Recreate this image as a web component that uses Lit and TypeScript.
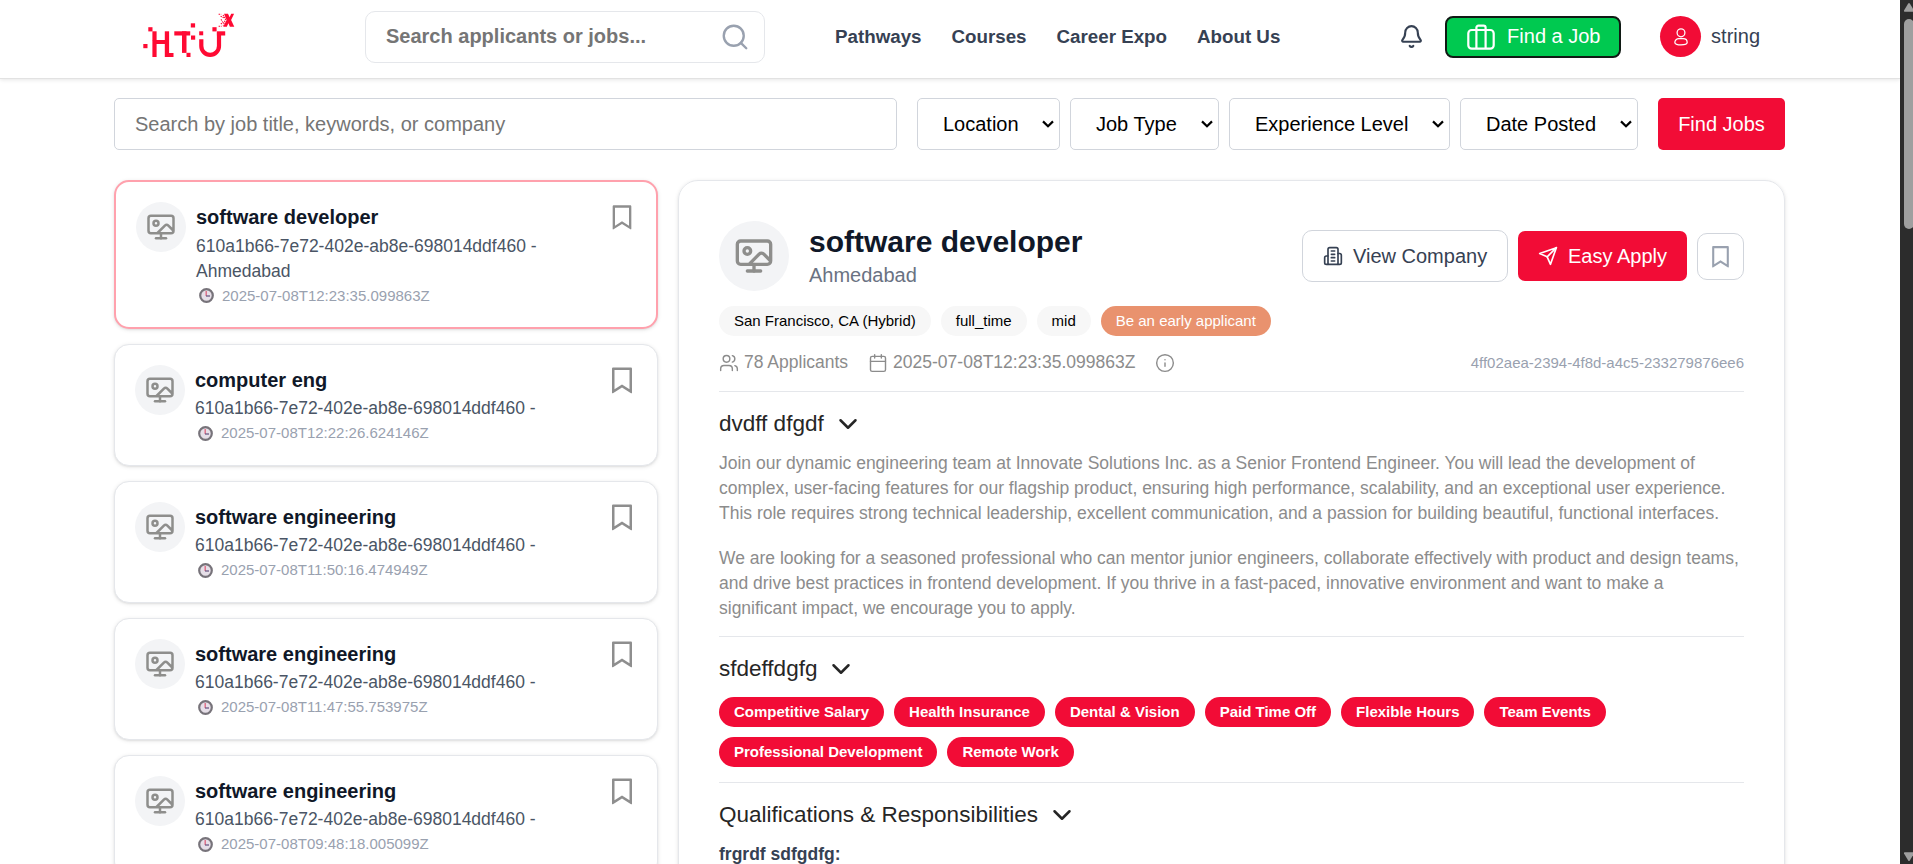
import { LitElement, html, svg, css } from "lit";
import { customElement, property } from "lit/decorators.js";
import { classMap } from "lit/directives/class-map.js";

const bookmarkPath = svg`<path fill="currentColor" d="M5 2H19C19.5523 2 20 2.44772 20 3V22.1433C20 22.4194 19.7761 22.6434 19.5 22.6434C19.4061 22.6434 19.314 22.6168 19.2344 22.5669L12 18.0313L4.76559 22.5669C4.53163 22.7136 4.22306 22.6429 4.07637 22.4089C4.02647 22.3293 4 22.2373 4 22.1433V3C4 2.44772 4.44772 2 5 2ZM18 4H6V19.4324L12 15.6707L18 19.4324V4Z"/>`;

const strokeIcons: Record<string, unknown> = {
  search: svg`<circle cx="11" cy="11" r="8"/><path d="m21 21-4.35-4.35"/>`,
  bell: svg`<path d="M10.268 21a2 2 0 0 0 3.464 0"/><path d="M3.262 15.326A1 1 0 0 0 4 17h16a1 1 0 0 0 .74-1.673C19.41 13.956 18 12.499 18 8A6 6 0 0 0 6 8c0 4.499-1.411 5.956-2.738 7.326"/>`,
  wallpaper: svg`<circle cx="8" cy="9" r="2"/><path d="m9 17 6.1-6.1a2 2 0 0 1 2.81.01L22 15V5a2 2 0 0 0-2-2H4a2 2 0 0 0-2 2v10a2 2 0 0 0 2 2h16a2 2 0 0 0 2-2"/><path d="M8 21h8"/><path d="M12 17v4"/>`,
  building: svg`<path d="M6 22V4a2 2 0 0 1 2-2h8a2 2 0 0 1 2 2v18Z"/><path d="M6 12H4a2 2 0 0 0-2 2v6a2 2 0 0 0 2 2h2"/><path d="M18 9h2a2 2 0 0 1 2 2v9a2 2 0 0 1-2 2h-2"/><path d="M10 6h4"/><path d="M10 10h4"/><path d="M10 14h4"/><path d="M10 18h4"/>`,
  send: svg`<path d="m22 2-7 20-4-9-9-4Z"/><path d="M22 2 11 13"/>`,
  users: svg`<path d="M16 21v-2a4 4 0 0 0-4-4H6a4 4 0 0 0-4 4v2"/><circle cx="9" cy="7" r="4"/><path d="M22 21v-2a4 4 0 0 0-3-3.87"/><path d="M16 3.13a4 4 0 0 1 0 7.75"/>`,
  calendar: svg`<path d="M8 2v4"/><path d="M16 2v4"/><rect width="18" height="18" x="3" y="4" rx="2"/><path d="M3 10h18"/>`,
  info: svg`<circle cx="12" cy="12" r="10"/><path d="M12 16v-4"/><path d="M12 8h.01"/>`,
  chevron: svg`<path d="m6 9 6 6 6-6"/>`,
  person: svg`<circle cx="12" cy="7" r="4.7"/><path d="M4.6 18.6c0-2.8 2.2-4.6 4.8-4.6h5.2c2.6 0 4.8 1.8 4.8 4.6 0 2-3.4 2.8-7.4 2.8s-7.4-.8-7.4-2.8z"/>`,
};

@customElement("ui-icon")
class UiIcon extends LitElement {
  @property() name = "";
  @property({ type: Number }) size = 24;
  @property({ type: Number }) weight = 2;
  static styles = css`
    :host { display: inline-flex; flex: none; }
    svg { display: block; }
  `;
  render() {
    if (this.name === "bookmark") {
      return html`<svg width=${this.size} height=${this.size} viewBox="0 0 24 24">${bookmarkPath}</svg>`;
    }
    return html`<svg width=${this.size} height=${this.size} viewBox="0 0 24 24" fill="none" stroke="currentColor"
      stroke-width=${this.weight} stroke-linecap="round" stroke-linejoin="round">${strokeIcons[this.name]}</svg>`;
  }
}

@customElement("brand-logo")
class BrandLogo extends LitElement {
  static styles = css`
    :host { display: block; flex: none; }
    svg { display: block; }
  `;
  render() {
    return html`<svg width="92" height="49" viewBox="143 12 92 49" fill="#ff0a33">
      <rect x="143.3" y="44" width="4.2" height="4.2"/>
      <rect x="148.3" y="27.2" width="4.2" height="4.2"/>
      <rect x="152.4" y="31.3" width="4.2" height="9"/>
      <rect x="152.4" y="40" width="4.2" height="17"/>
      <rect x="156" y="40" width="9.5" height="4"/>
      <rect x="164.8" y="31.3" width="4.3" height="25.7"/>
      <rect x="168.6" y="53" width="4.9" height="4"/>
      <rect x="174.3" y="31.3" width="15.9" height="4.2"/>
      <rect x="182" y="31.3" width="4.5" height="21.6"/>
      <rect x="191" y="35.5" width="4.2" height="4.2"/>
      <rect x="190.8" y="23.3" width="4.3" height="4.2"/>
      <rect x="186.5" y="52.8" width="4" height="4.2"/>
      <rect x="199.2" y="31.3" width="4" height="4"/>
      <rect x="212.4" y="27.2" width="4.2" height="4.2"/>
      <rect x="216.9" y="31.3" width="8.3" height="4.2"/>
      <path d="M201.3 39.3V46a8.85 8.85 0 0 0 17.7 0V32" fill="none" stroke="#ff0a33" stroke-width="4.2"/>
      <path d="M224 13.8h4l1.6 3.4 1.6-3.4h2.9l-3 6.3 3.2 6.7h-4.4l-1.5-3.5-1.6 3.5h-3.6l3.4-6.7z"/>
      <path d="M218.6 14.2h2.6M220.6 16.2l3.2 1.6M223 15l2.6 4-2.4 6.6M221 19.4l1.6 2.4M220.8 24l2.6-1.8M218.6 26.2h3" fill="none" stroke="#ff0a33" stroke-width="1.1" stroke-dasharray="1.4 .8"/>
    </svg>`;
  }
}

interface Job { title: string; sub: string; place?: string; date: string; selected?: boolean; }

const jobs: Job[] = [
  { title: "software developer", sub: "610a1b66-7e72-402e-ab8e-698014ddf460 -", place: "Ahmedabad", date: "2025-07-08T12:23:35.099863Z", selected: true },
  { title: "computer eng", sub: "610a1b66-7e72-402e-ab8e-698014ddf460 -", date: "2025-07-08T12:22:26.624146Z" },
  { title: "software engineering", sub: "610a1b66-7e72-402e-ab8e-698014ddf460 -", date: "2025-07-08T11:50:16.474949Z" },
  { title: "software engineering", sub: "610a1b66-7e72-402e-ab8e-698014ddf460 -", date: "2025-07-08T11:47:55.753975Z" },
  { title: "software engineering", sub: "610a1b66-7e72-402e-ab8e-698014ddf460 -", date: "2025-07-08T09:48:18.005099Z" },
];

@customElement("job-card")
class JobCard extends LitElement {
  @property({ attribute: false }) job!: Job;
  static styles = css`
    :host { display: block; }
    .card {
      box-sizing: border-box; display: flex; gap: 10px; padding: 20px; min-height: 122px;
      background: #fff; border: 1px solid #e5e7eb; border-radius: 15px;
      box-shadow: 0 1px 4px rgba(0,0,0,.1), 0 1px 2px rgba(0,0,0,.06);
    }
    .card.selected { border: 2px solid #ffa1ad; }
    .thumb {
      flex: none; width: 50px; height: 50px; border-radius: 50%; background: #f3f4f6;
      display: flex; align-items: center; justify-content: center; color: #8e8e8c;
    }
    .info { flex: 1; white-space: nowrap; }
    .title { font-size: 20px; line-height: 30px; font-weight: 700; color: #101828; }
    .sub { font-size: 17.5px; line-height: 25px; color: #4a5565; margin-top: 1px; }
    .when { display: flex; align-items: center; gap: 8px; padding-left: 3px; font-size: 15px; line-height: 24px; color: #99a1af; }
    .selected .sub { margin-top: 2px; }
    .selected .when { line-height: 23px; }
    .save { color: #8e8e8e; }
    .selected .save { padding-top: 1px; }
  `;
  render() {
    const j = this.job;
    return html`<article class=${classMap({ card: true, selected: !!j.selected })}>
      <div class="thumb"><ui-icon name="wallpaper" size="30"></ui-icon></div>
      <div class="info">
        <div class="title">${j.title}</div>
        <div class="sub">${j.sub}${j.place ? html`<br>${j.place}` : ""}</div>
        <div class="when">
          <svg width="15" height="15" viewBox="0 0 15 15">
            <circle cx="7.5" cy="7.5" r="6.3" fill="#e6dfe8" stroke="#77737a" stroke-width="2.2"/>
            <path d="M7.2 3v5" stroke="#e0627c" stroke-width="1.3"/><path d="M7 8h4" stroke="#6d5a86" stroke-width="1.3"/>
          </svg>${j.date}
        </div>
      </div>
      <div class="save"><ui-icon name="bookmark" size=${j.selected ? 28 : 30}></ui-icon></div>
    </article>`;
  }
}

@customElement("app-root")
class AppRoot extends LitElement {
  static styles = css`
    :host {
      display: flex; width: 100%; height: 864px; overflow: hidden; background: #fff;
      font-family: "Liberation Sans", Arial, sans-serif; font-size: 20px;
    }
    .page { flex: 1; min-width: 0; height: 864px; overflow: hidden; }
    .scrollbar { flex: none; width: 13px; height: 864px; background: #2c2c2c; overflow: hidden; display: flex; flex-direction: column; padding-left: 4px; box-sizing: border-box; }
    .scrollbar svg { display: block; flex: none; }
    .thumb { width: 10px; height: 210px; flex: none; border-radius: 5px; background: #9f9f9f; }
    .grow { flex: 1; }

    header {
      box-sizing: border-box; height: 79px; padding: 0 140px 5px 143px; display: flex; align-items: center;
      background: #fff; border-bottom: 1px solid #e2e2e2; box-shadow: 0 1px 4px rgba(0,0,0,.1); white-space: nowrap;
    }
    .find {
      box-sizing: border-box; width: 400px; height: 52px; margin-left: 130px; padding: 0 14px 0 20px;
      display: flex; align-items: center; justify-content: space-between;
      border: 1px solid #e5e7eb; border-radius: 10px; color: #757575; font-weight: 700;
    }
    .find ui-icon { color: #99a1af; }
    nav { display: flex; gap: 30px; margin-left: 70px; font-size: 18.75px; font-weight: 700; color: #364153; }
    .bell { margin-left: auto; color: #364153; display: flex; }
    .job-btn {
      box-sizing: border-box; width: 176px; height: 42px; margin-left: 21px; padding-left: 20px;
      display: flex; align-items: center; gap: 12px; border: 2px solid #101a14; border-radius: 8px;
      background: #00c950; color: #fff;
    }
    .avatar {
      width: 41px; height: 41px; border-radius: 50%; background: #f20c36; color: #fff; margin: 0 10px 0 39px;
      display: flex; align-items: center; justify-content: center;
    }
    .user { color: #364153; }

    main { padding: 19px 115px 0 114px; }
    .filters { display: flex; height: 52px; align-items: stretch; white-space: nowrap; }
    .field, .select { box-sizing: border-box; border: 1px solid #d1d5dc; border-radius: 5px; display: flex; align-items: center; }
    .field { flex: 1; padding-left: 20px; color: #757575; margin-right: 20px; }
    .selects { display: flex; gap: 10px; margin-right: 20px; }
    .select { padding: 0 5px 0 25px; justify-content: space-between; color: #000; }
    .loc { width: 143px; } .type { width: 149px; } .exp { width: 221px; } .date { width: 178px; }
    .go { width: 127px; border-radius: 5px; background: #f20c36; color: #fff; display: flex; align-items: center; justify-content: center; }

    .cols { display: flex; gap: 20px; margin-top: 30px; align-items: flex-start; }
    .list { width: 544px; flex: none; display: flex; flex-direction: column; gap: 15px; }
    .detail {
      flex: 1; min-width: 0; box-sizing: border-box; padding: 40px; height: 760px;
      border: 1px solid #e5e7eb; border-radius: 20px; box-shadow: 0 1px 4px rgba(0,0,0,.1), 0 1px 2px rgba(0,0,0,.06);
      white-space: nowrap;
    }
    .head { display: flex; align-items: center; height: 70px; }
    .logo {
      width: 70px; height: 70px; border-radius: 50%; background: #f3f4f6; color: #8e8e8c; margin-right: 20px;
      display: flex; align-items: center; justify-content: center;
    }
    h1 { margin: 0; font-size: 30px; line-height: 37px; color: #101828; }
    .where { line-height: 30px; color: #6a7282; }
    .actions { margin-left: auto; display: flex; align-items: center; gap: 10px; }
    .btn { box-sizing: border-box; display: flex; align-items: center; gap: 10px; border-radius: 10px; }
    .view { width: 206px; height: 52px; padding-left: 20px; border: 1px solid #d1d5dc; color: #364153; }
    .apply { width: 169px; height: 50px; padding-left: 20px; background: #f20c36; color: #fff; border-radius: 7px; }
    .keep { width: 47px; height: 47px; justify-content: center; border: 1px solid #d1d5dc; color: #99a1af; }
    .tags { display: flex; flex-wrap: wrap; gap: 10px; margin-top: 15px; font-size: 15px; }
    .tag { box-sizing: border-box; height: 30px; padding: 0 15px; line-height: 30px; border-radius: 15px; background: #f7f7f7; color: #000; }
    .early { background: #e9926e; color: #fff; }
    .meta { display: flex; align-items: center; gap: 20px; height: 25px; margin: 14px 0 16px; font-size: 17.5px; color: #8c8c8c; }
    .meta span { display: flex; align-items: center; gap: 5px; }
    .meta .id { margin-left: auto; font-size: 15px; color: #99a1af; }
    section { border-top: 1px solid #e5e7eb; margin-top: 15px; padding-top: 15px; }
    h2 { margin: 0; display: flex; align-items: center; gap: 9px; height: 34px; font-size: 22.5px; font-weight: 400; color: #262626; }
    p { margin: 10px 0 20px; font-size: 17.5px; line-height: 25px; color: #8c8c8c; }
    p + p { margin: 0; }
    .perks { gap: 10px; margin-top: 11px; }
    .perks .tag { background: #f20c36; color: #fff; font-weight: 700; }
    h3 { margin: 10px 0 0; font-size: 17.5px; line-height: 25px; color: #364153; }
  `;

  private select(label: string, cls: string) {
    return html`<div class="select ${cls}">${label}
      <svg width="12" height="8" viewBox="0 0 12 8" fill="none" stroke="#000" stroke-width="2.2"><path d="M1 1.4l5 4.8 5-4.8"/></svg></div>`;
  }

  private heading(label: string) {
    return html`<h2>${label}<ui-icon name="chevron" size="30"></ui-icon></h2>`;
  }

  render() {
    const perks = ["Competitive Salary", "Health Insurance", "Dental & Vision", "Paid Time Off", "Flexible Hours", "Team Events", "Professional Development", "Remote Work"];
    return html`
      <div class="page">
        <header>
          <brand-logo></brand-logo>
          <div class="find">Search applicants or jobs...<ui-icon name="search" size="30" weight="1.9"></ui-icon></div>
          <nav><span>Pathways</span><span>Courses</span><span>Career Expo</span><span>About Us</span></nav>
          <div class="bell"><ui-icon name="bell" size="25"></ui-icon></div>
          <div class="job-btn">
            <svg width="28" height="26" viewBox="0 0 28 26" fill="none" stroke="#fff" stroke-width="2.2">
              <rect x="1.3" y="6" width="25.4" height="18.6" rx="3.4"/>
              <path d="M9.4 24.6V3.6a2 2 0 0 1 2-2h5.2a2 2 0 0 1 2 2v21"/>
            </svg>Find a Job</div>
          <div class="avatar"><ui-icon name="person" size="20" weight="1.5"></ui-icon></div>
          <div class="user">string</div>
        </header>
        <main>
          <div class="filters">
            <div class="field">Search by job title, keywords, or company</div>
            <div class="selects">
              ${this.select("Location", "loc")}${this.select("Job Type", "type")}${this.select("Experience Level", "exp")}${this.select("Date Posted", "date")}
            </div>
            <div class="go">Find Jobs</div>
          </div>
          <div class="cols">
            <div class="list">${jobs.map((j) => html`<job-card .job=${j}></job-card>`)}</div>
            <div class="detail">
              <div class="head">
                <div class="logo"><ui-icon name="wallpaper" size="40"></ui-icon></div>
                <div><h1>software developer</h1><div class="where">Ahmedabad</div></div>
                <div class="actions">
                  <div class="btn view"><ui-icon name="building" size="20"></ui-icon>View Company</div>
                  <div class="btn apply"><ui-icon name="send" size="20"></ui-icon>Easy Apply</div>
                  <div class="btn keep"><ui-icon name="bookmark" size="25"></ui-icon></div>
                </div>
              </div>
              <div class="tags">
                <span class="tag">San Francisco, CA (Hybrid)</span><span class="tag">full_time</span><span class="tag">mid</span><span class="tag early">Be an early applicant</span>
              </div>
              <div class="meta">
                <span><ui-icon name="users" size="20" weight="1.7"></ui-icon>78 Applicants</span>
                <span><ui-icon name="calendar" size="20" weight="1.7"></ui-icon>2025-07-08T12:23:35.099863Z</span>
                <ui-icon name="info" size="20" weight="1.7"></ui-icon>
                <div class="id">4ff02aea-2394-4f8d-a4c5-233279876ee6</div>
              </div>
              <section>
                ${this.heading("dvdff dfgdf")}
                <p>Join our dynamic engineering team at Innovate Solutions Inc. as a Senior Frontend Engineer. You will lead the development of<br>complex, user-facing features for our flagship product, ensuring high performance, scalability, and an exceptional user experience.<br>This role requires strong technical leadership, excellent communication, and a passion for building beautiful, functional interfaces.</p>
                <p>We are looking for a seasoned professional who can mentor junior engineers, collaborate effectively with product and design teams,<br>and drive best practices in frontend development. If you thrive in a fast-paced, innovative environment and want to make a<br>significant impact, we encourage you to apply.</p>
              </section>
              <section>
                ${this.heading("sfdeffdgfg")}
                <div class="tags perks">${perks.map((p) => html`<span class="tag">${p}</span>`)}</div>
              </section>
              <section>
                ${this.heading("Qualifications & Responsibilities")}
                <h3>frgrdf sdfgdfg:</h3>
              </section>
            </div>
          </div>
        </main>
      </div>
      <div class="scrollbar">
        <svg width="11" height="19" viewBox="0 0 11 19" fill="#9f9f9f"><path d="M0 10.5 4.2 3.4q.8-1 1.6 0L10 10.5q.2 1-.8 1.2H.6Q-.2 11.5 0 10.5z"/></svg>
        <div class="thumb"></div>
        <div class="grow"></div>
        <svg width="11" height="14" viewBox="0 0 11 14" fill="#9f9f9f"><path d="M0 3.5 4.2 10.6q.8 1 1.6 0L10 3.5q.2-1-.8-1.2H.6Q-.2 2.5 0 3.5z"/></svg>
      </div>`;
  }
}
